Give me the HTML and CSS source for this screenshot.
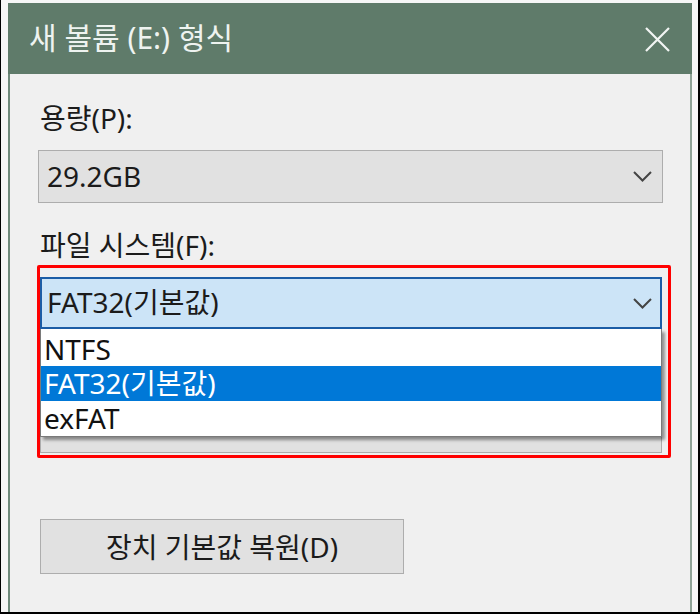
FILE: index.html
```html
<!DOCTYPE html>
<html lang="ko">
<head>
<meta charset="utf-8">
<title>새 볼륨 (E:) 형식</title>
<link rel="stylesheet" href="styles.css">
</head>
<body>
<div class="frame">
  <div class="window">
    <div class="titlebar">
      <span class="title">새 볼륨 (E:) 형식</span>
      <svg class="close" width="25" height="25" viewBox="0 0 25 25"><path d="M1 1 L24 24 M24 1 L1 24" stroke="#f2f5f3" stroke-width="2.2" fill="none"/></svg>
    </div>
    <div class="content">
      <div class="label">용량(P):</div>
      <div class="combo">
        <span class="combo-text">29.2GB</span>
        <svg class="chev" width="19" height="11" viewBox="0 0 19 11"><polyline points="1,1 9.5,9.5 18,1" stroke="#444" stroke-width="2" fill="none"/></svg>
      </div>
      <div class="label label-fs">파일 시스템(F):</div>
      <div class="group">
        <div class="combo combo-focus">
          <span class="combo-text">FAT32(기본값)</span>
          <svg class="chev" width="19" height="11" viewBox="0 0 19 11"><polyline points="1,1 9.5,9.5 18,1" stroke="#444" stroke-width="2" fill="none"/></svg>
        </div>
        <div class="combo combo-under"></div>
        <ul class="dropdown">
          <li class="item item-first">NTFS</li>
          <li class="item item-sel">FAT32(기본값)</li>
          <li class="item">exFAT</li>
        </ul>
        <div class="highlight"></div>
      </div>
      <button class="btn">장치 기본값 복원(D)</button>
    </div>
  </div>
</div>
</body>
</html>
```
FILE: styles.css
```css
html, body {
  margin: 0;
  padding: 0;
}
body {
  width: 700px;
  height: 614px;
  overflow: hidden;
  font-family: "Noto Sans", "Noto Sans CJK KR", sans-serif;
}
.frame {
  box-sizing: border-box;
  width: 700px;
  height: 614px;
  border-left: 1px solid #000;
  border-right: 2px solid #000;
  border-bottom: 2px solid #000;
  background: #f6f6f6;
  padding: 3px 0 0 7px;
  display: flex;
}
.window {
  box-sizing: border-box;
  width: 684px;
  border-left: 2px solid #6f8a7b;
  border-right: 2px solid #8ea296;
  background: #f0f0f0;
  display: flex;
  flex-direction: column;
}
.titlebar {
  height: 71px;
  background: #5f7b6a;
  margin: 0 -2px;
  padding: 0 22px 0 21px;
  display: flex;
  align-items: center;
  justify-content: space-between;
}
.title {
  color: #eef3f0;
  font-size: 30px;
  line-height: 1;
  margin-top: -1px;
}
.close {
  display: block;
  margin-top: 1px;
}
.content {
  padding: 24px 0 0 28px;
  display: flex;
  flex-direction: column;
  align-items: flex-start;
  color: #1b1b1b;
  font-size: 28px;
}
.label {
  height: 40px;
  line-height: 40px;
  padding-left: 2px;
}
.combo {
  box-sizing: border-box;
  margin-top: 12px;
  width: 625px;
  height: 53px;
  border: 1px solid #adadad;
  background: #e1e1e1;
  display: flex;
  align-items: center;
  justify-content: space-between;
  padding: 0 10px 0 8px;
}
.combo-text {
  line-height: 1;
  margin-top: -2px;
}
.chev {
  display: block;
}
.label-fs {
  margin-top: 22px;
}
.group {
  position: relative;
  display: flex;
  flex-direction: column;
  padding-bottom: 5px;
}
.combo-focus {
  margin-left: 2px;
  width: 622px;
  height: 52px;
  border: 2px solid #1c5da6;
  background: #cce4f7;
  padding: 0 8px 0 5px;
}
.combo-under {
  margin-left: 2px;
  width: 622px;
  margin-top: 71px;
}
.dropdown {
  position: absolute;
  left: 2px;
  top: 64px;
  box-sizing: border-box;
  width: 622px;
  height: 108px;
  margin: 0;
  padding: 0;
  list-style: none;
  background: #fff;
  border: 1px solid #7a7a7a;
  border-top: none;
  box-shadow: 3px 3px 3px rgba(0, 0, 0, 0.4);
}
.item {
  height: 35px;
  line-height: 35px;
  padding-left: 3px;
  color: #111;
}
.item-first {
  height: 34px;
  line-height: 34px;
  padding-top: 3px;
}
.item-sel {
  background: #0078d7;
  color: #fff;
}
.highlight {
  position: absolute;
  left: -1px;
  top: 0;
  width: 634px;
  height: 193px;
  box-sizing: border-box;
  border: 3px solid #ff0000;
  border-radius: 2px;
  pointer-events: none;
}
.btn {
  margin: 61px 0 0 2px;
  box-sizing: border-box;
  width: 364px;
  height: 55px;
  border: 1px solid #adadad;
  background: #e1e1e1;
  font-family: inherit;
  font-size: 28px;
  color: #1b1b1b;
  padding: 0;
  line-height: 1;
}
```
